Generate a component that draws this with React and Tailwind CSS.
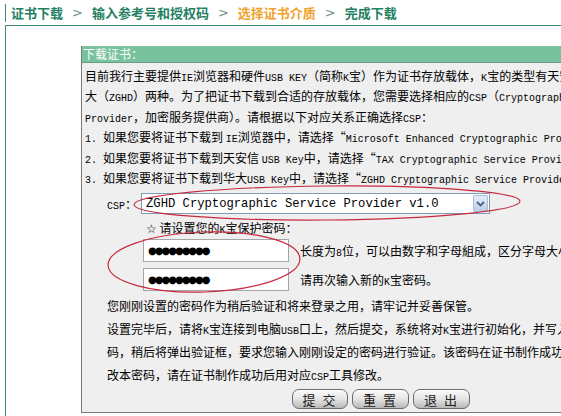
import React from "react";

const M = ({ children }) => (
  <span className="font-['Liberation_Mono',monospace] text-[10px] leading-none">{children}</span>
);

const Sep = () => (
  <span className="mx-[9px] font-['DejaVu_Sans',sans-serif] font-normal text-[13px] text-[#6f8f86]">&gt;</span>
);

const Dots = () => (
  <span className="font-['DejaVu_Sans',sans-serif] text-[10px] tracking-[-2px] leading-none text-black">
    ●●●●●●●●●
  </span>
);

const Btn = ({ label, w }) => (
  <button
    className={`h-[20px] ${w} rounded-[7px] border border-[#6b6b6b] bg-gradient-to-b from-[#fbfbfb] via-[#e4e4e4] to-[#b9b9b9] text-[13px] leading-none tracking-[2px] text-[#222] shadow-[inset_0_1px_0_#fff]`}
  >
    {label}
  </button>
);

export default function App() {
  return (
    <div className="relative w-[561px] h-[416px] overflow-hidden bg-white font-['Noto_Sans_CJK_SC',sans-serif] text-[12px] text-black">
      {/* breadcrumb */}
      <div className="flex items-center h-[25px] pl-[5px] pt-[1px]">
        <div className="h-[18px] border-l border-[#3d8a78]" />
        <div className="flex items-center pl-[5px] font-bold text-[13px] text-[#238062] whitespace-nowrap">
          <span>证书下载</span>
          <Sep />
          <span>输入参考号和授权码</span>
          <Sep />
          <span className="text-[#f0a22e]">选择证书介质</span>
          <Sep />
          <span>完成下载</span>
        </div>
      </div>

      {/* frame */}
      <div className="ml-[5px] h-[391px] border-l border-t border-[#3d8a78] pl-[75px] pt-[20px]">
        <div className="w-[520px] border-l border-b border-[#7a7a7a]">
          <div className="h-[16px] bg-[#78c39e] text-white text-[12px] leading-[16px] pl-[1px]">下载证书：</div>
          <div className="border-t border-[#6a9c86] bg-[#efefef] pl-[3px] pt-[3px] pb-[3px] whitespace-nowrap overflow-hidden">
            <div className="leading-[20.4px]">
              <div>
                目前我行主要提供<M>IE</M>浏览器和硬件<M>USB KEY</M>（简称<M>K</M>宝）作为证书存放载体，<M>K</M>宝的类型有天安信和华
              </div>
              <div>
                大（<M>ZGHD</M>）两种。为了把证书下载到合适的存放载体，您需要选择相应的<M>CSP</M>（<M>Cryptographic Service</M>
              </div>
              <div>
                <M>Provider</M>，加密服务提供商）。请根据以下对应关系正确选择<M>CSP</M>：
              </div>
              <div>
                <M>1. </M>如果您要将证书下载到 <M>IE</M>浏览器中，请选择“<M>Microsoft Enhanced Cryptographic Provider v1.0</M>”
              </div>
              <div>
                <M>2. </M>如果您要将证书下载到天安信 <M>USB Key</M>中，请选择“<M>TAX Cryptographic Service Provider</M>”
              </div>
              <div>
                <M>3. </M>如果您要将证书下载到华大<M>USB Key</M>中，请选择“<M>ZGHD Cryptographic Service Provider v1.0</M>”
              </div>
            </div>

            {/* CSP select */}
            <div className="flex items-center mt-[5px] h-[21px]">
              <span className="w-[56px] pl-[22px]">
                <M>CSP</M>：
              </span>
              <div className="flex items-center justify-between w-[349px] h-[21px] border border-[#7f9db9] bg-white pl-[4px] pr-[1px]">
                <span className="font-['Liberation_Mono',monospace] text-[12.2px] leading-none">
                  ZGHD Cryptographic Service Provider v1.0
                </span>
                <span className="flex items-center justify-center w-[15px] h-[17px] rounded-[2px] border border-[#a9bcd6] bg-gradient-to-b from-[#e6eefa] to-[#bccbe2]">
                  <svg width="9" height="6" viewBox="0 0 9 6">
                    <path d="M1 1 L4.5 4.5 L8 1" stroke="#4d6185" strokeWidth="1.8" fill="none" />
                  </svg>
                </span>
              </div>
            </div>

            {/* password */}
            <div className="mt-[4px] h-[20px] leading-[20px] pl-[61px]">
              <span className="font-['DejaVu_Sans',sans-serif] text-[12px] leading-none">☆</span> 请设置您的<M>K</M>宝保护密码：
            </div>
            <div className="flex items-center mt-[1px] pl-[58px]">
              <div className="flex items-center w-[146px] h-[23px] border border-[#a5a5a5] bg-white pl-[4px]">
                <Dots />
              </div>
              <span className="ml-[11px]">
                长度为<M>8</M>位，可以由数字和字母組成，区分字母大小写。
              </span>
            </div>
            <div className="flex items-center mt-[6px] pl-[58px]">
              <div className="flex items-center w-[146px] h-[23px] border border-[#a5a5a5] bg-white pl-[4px]">
                <Dots />
              </div>
              <span className="ml-[11px]">
                请再次输入新的<M>K</M>宝密码。
              </span>
            </div>

            {/* notes */}
            <div className="mt-[4px] pl-[22px] leading-[22.7px]">
              <div>您刚刚设置的密码作为稍后验证和将来登录之用，请牢记并妥善保管。</div>
              <div>
                设置完毕后，请将<M>K</M>宝连接到电脑<M>USB</M>口上，然后提交，系统将对<M>K</M>宝进行初始化，并写入您设置的密
              </div>
              <div>码，稍后将弹出验证框，要求您输入刚刚设定的密码进行验证。该密码在证书制作成功后仍然有效，如需修</div>
              <div>
                改本密码，请在证书制作成功后用对应<M>CSP</M>工具修改。
              </div>
            </div>

            {/* buttons */}
            <div className="flex mt-[3px] pl-[207px] gap-[4px]">
              <Btn label="提 交" w="w-[56px]" />
              <Btn label="重 置" w="w-[57px]" />
              <Btn label="退 出" w="w-[57px]" />
            </div>
          </div>
        </div>
      </div>

      {/* hand-drawn red marks */}
      <svg className="absolute inset-0 pointer-events-none" width="561" height="416">
        <ellipse cx="327" cy="203" rx="193" ry="17" fill="none" stroke="#c8283c" strokeWidth="1.2" transform="rotate(-0.5 327 203)" />
        <ellipse cx="204" cy="262" rx="96" ry="30" fill="none" stroke="#c8283c" strokeWidth="1.2" transform="rotate(-2 204 262)" />
      </svg>
    </div>
  );
}
